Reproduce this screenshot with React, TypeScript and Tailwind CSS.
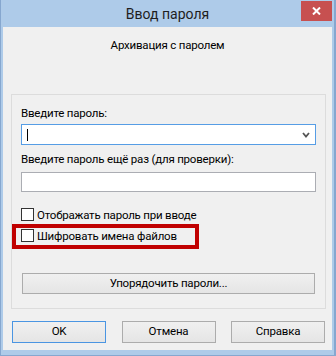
import React from 'react';

const font = "font-['Roboto','Noto_Sans',sans-serif]";

function Checkbox() {
  return <span className="mt-[1px] block h-[13px] w-[13px] shrink-0 border border-[#333333] bg-white" />;
}

function WinButton({ label, isDefault = false, className = '' }: { label: string; isDefault?: boolean; className?: string }) {
  return (
    <button
      type="button"
      className={`flex items-center justify-center border bg-gradient-to-b from-[#f0f0f0] to-[#e5e5e5] text-[11.5px] leading-none tracking-[-0.2px] text-black ${
        isDefault ? 'border-[#4a95e2]' : 'border-[#acacac]'
      } ${className}`}
    >
      {label}
    </button>
  );
}

export default function App() {
  return (
    <div className={`flex h-[356px] w-[336px] flex-col border-b border-l border-r-2 border-[#86a7cf] bg-[#aecbe9] pb-[5px] pl-[2px] pr-[2px] ${font}`}>
      {/* title bar */}
      <div className="relative flex h-[27px] shrink-0 items-center justify-center">
        <span className="text-[14px] leading-none text-[#1e1e1e]">Ввод пароля</span>
        <div className="absolute right-0 top-[1px] flex h-[20px] w-[31px] items-center justify-center bg-[#c75050]">
          <svg width="9" height="8" viewBox="0 0 9 8">
            <path d="M1 0.5 L8 7.5 M8 0.5 L1 7.5" stroke="#ffffff" strokeWidth="2" />
          </svg>
        </div>
      </div>

      {/* client */}
      <div className="flex flex-1 flex-col bg-[#f0f0f0] text-[11.5px] tracking-[-0.2px] text-black">
        <p className="mt-[10px] h-[16px] text-center leading-[16px]">Архивация с паролем</p>

        <div className="ml-[8px] mt-[41px] flex h-[215px] w-[315px] flex-col border border-[#dcdcdc]">
          <p className="ml-[9px] mt-[10px] h-[16px] leading-[16px]">Введите пароль:</p>
          <div className="ml-[9px] mt-[3px] flex h-[21px] w-[295px] items-center border border-[#569de5] bg-white pl-[5px] pr-[5px]">
            <span className="block h-[12px] w-px bg-black" />
            <svg className="ml-auto" width="8" height="6" viewBox="0 0 8 6">
              <path d="M1 1 L4 4.5 L7 1" stroke="#555555" strokeWidth="1.8" fill="none" />
            </svg>
          </div>

          <p className="ml-[9px] mt-[6px] h-[16px] leading-[16px]">Введите пароль ещё раз (для проверки):</p>
          <div className="ml-[9px] mt-[5px] h-[20px] w-[295px] border border-[#abadb3] bg-white" />

          <label className="ml-[9px] mt-[15px] flex h-[16px] items-start">
            <Checkbox />
            <span className="ml-[3px] leading-[16px]">Отображать пароль при вводе</span>
          </label>

          <div className="mt-[1px] h-[25px] w-[187px] border-4 border-[#c00000]">
            <label className="flex items-start pl-[5px]">
              <Checkbox />
              <span className="ml-[3px] leading-[16px]">Шифровать имена файлов</span>
            </label>
          </div>

          <WinButton label="Упорядочить пароли..." className="ml-[10px] mt-[24px] h-[21px] w-[293px]" />
        </div>

        <div className="ml-[9px] mt-[12px] flex w-[313px] justify-between">
          <WinButton label="OK" isDefault className="h-[22px] w-[94px]" />
          <WinButton label="Отмена" className="h-[22px] w-[94px]" />
          <WinButton label="Справка" className="h-[22px] w-[94px]" />
        </div>
      </div>
    </div>
  );
}
